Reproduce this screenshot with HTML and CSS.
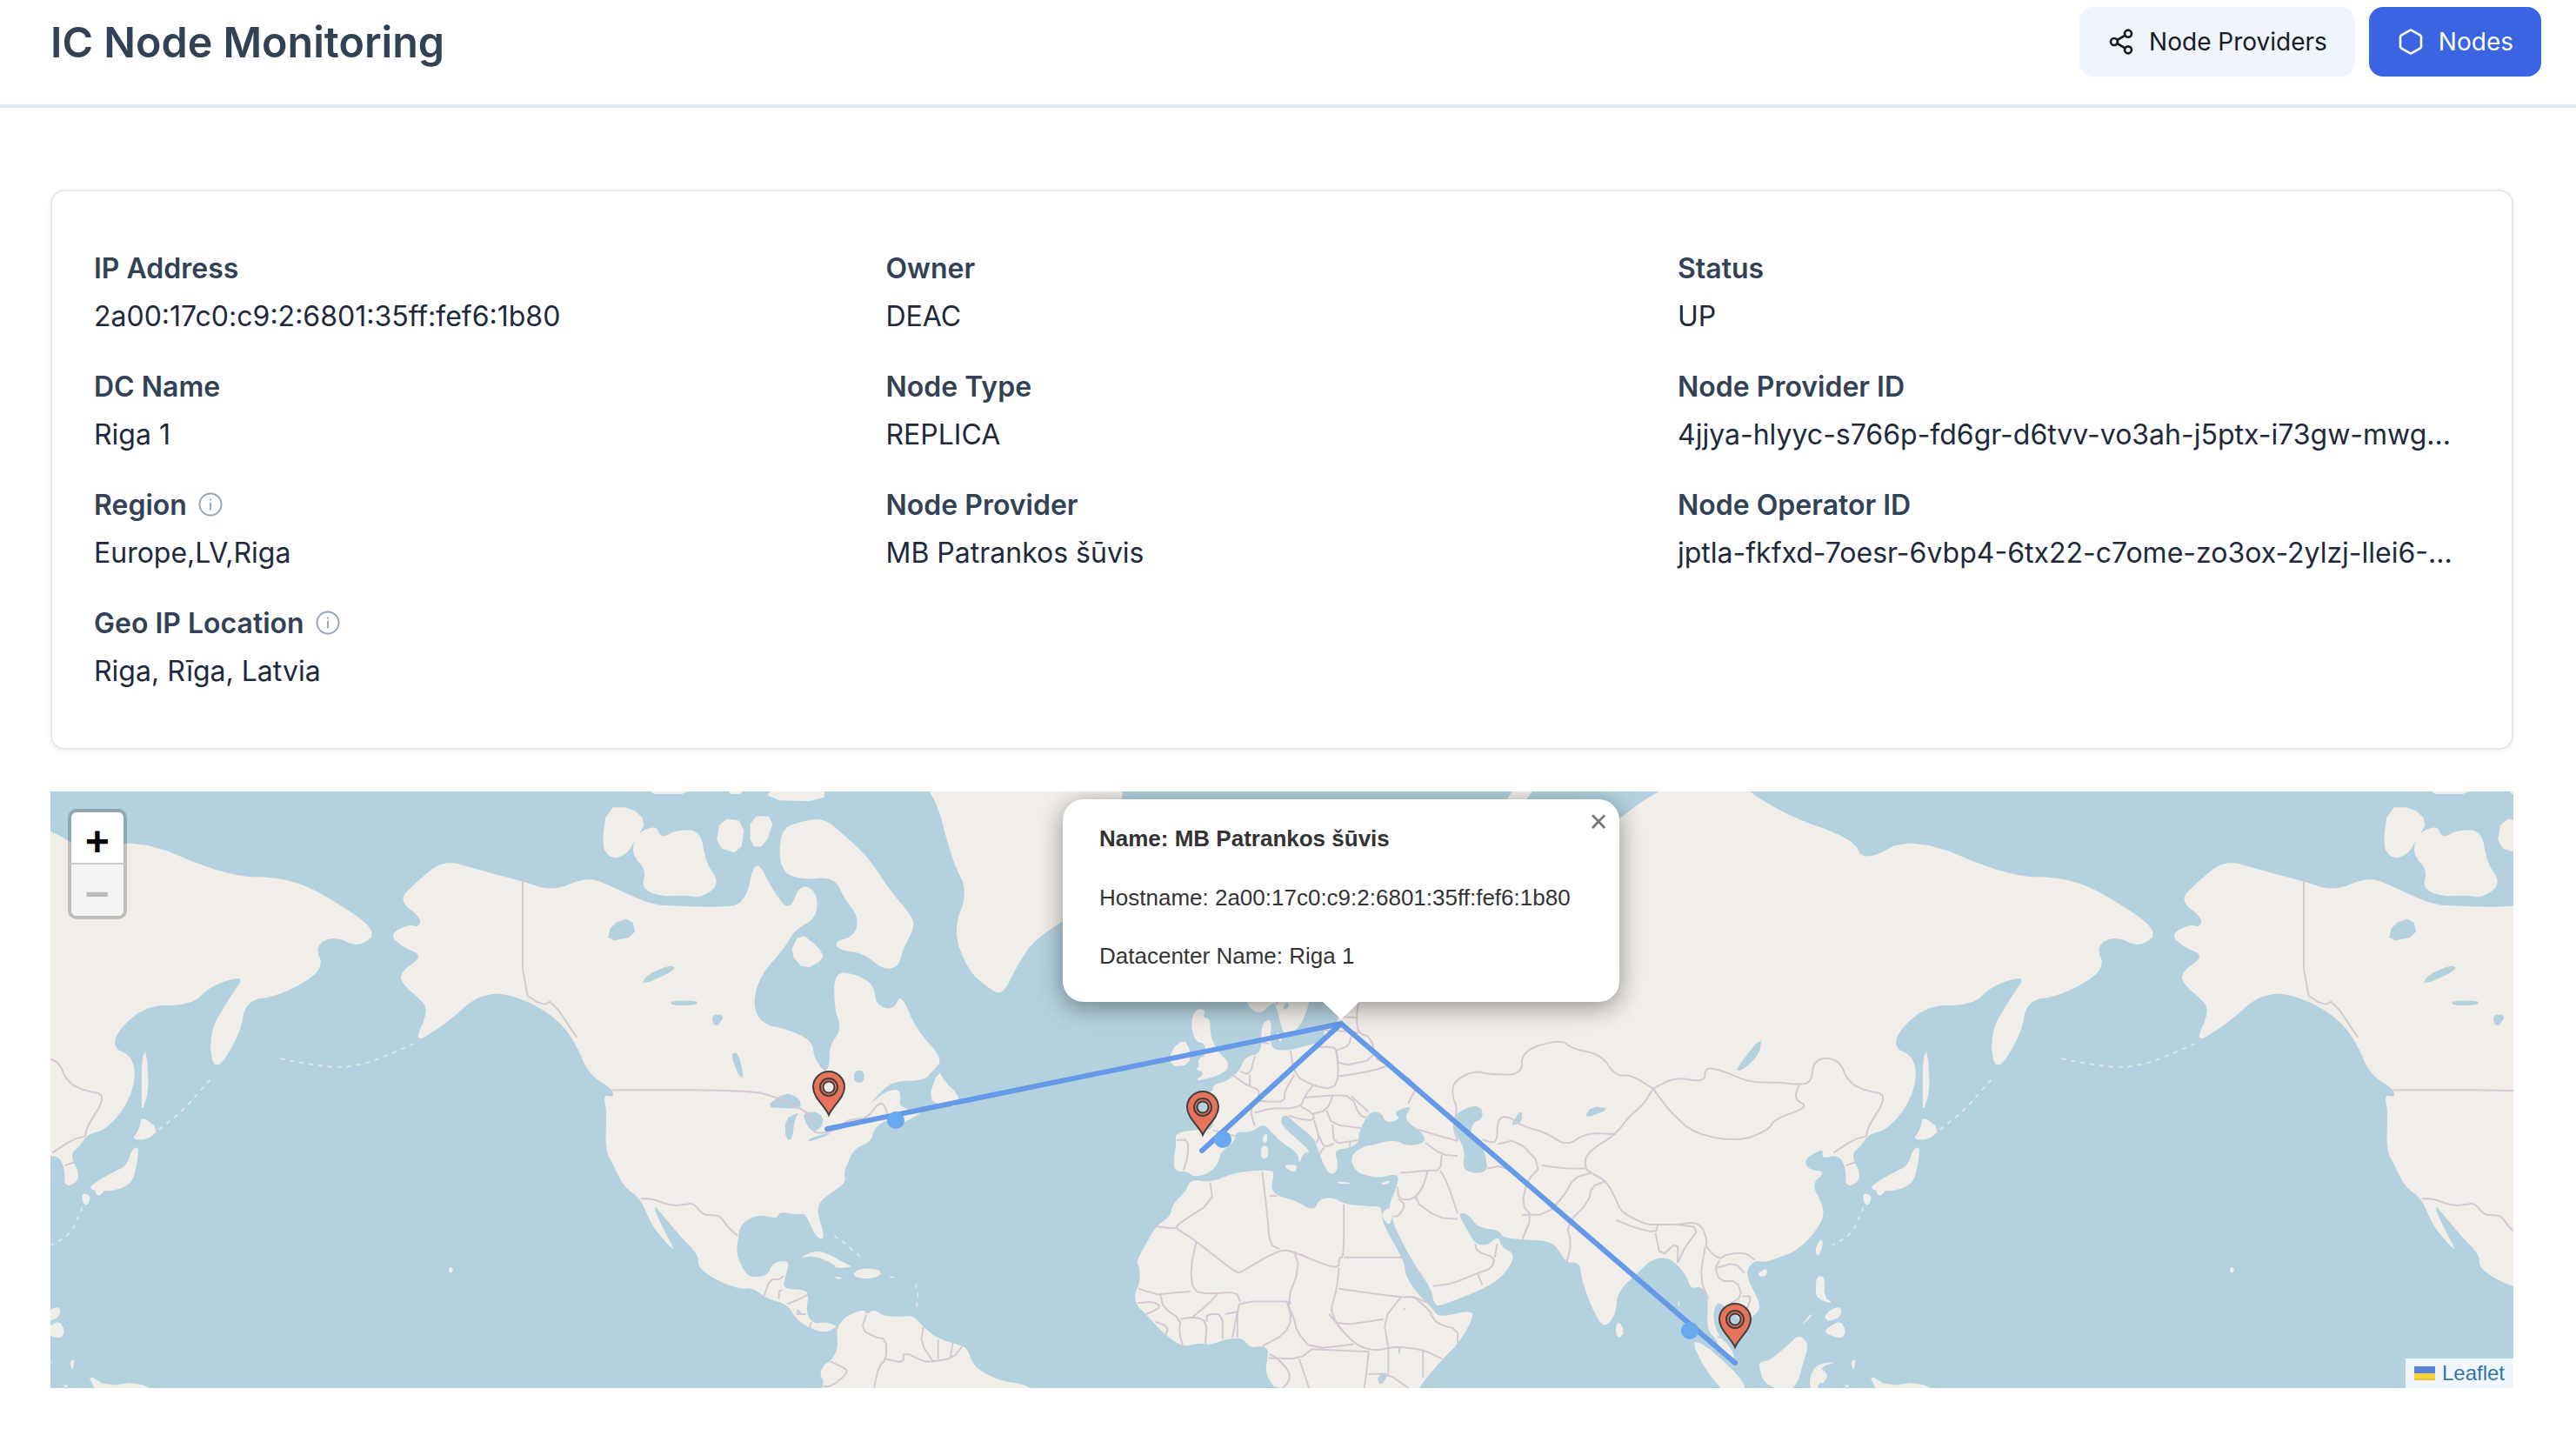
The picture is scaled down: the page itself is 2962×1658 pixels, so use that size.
FILE: index.html
```html
<!DOCTYPE html>
<html lang="en">
<head>
  <meta charset="UTF-8">
  <title>IC Node Monitoring</title>
  <link rel="stylesheet" href="styles.css">
</head>
<body>

  <header class="topbar">
    <h1 class="brand">IC Node Monitoring</h1>
    <nav class="nav">
      <a class="nav-btn" href="#">
        <svg class="nav-icon" viewBox="0 0 24 24" fill="none" stroke="currentColor" stroke-width="2" stroke-linecap="round" stroke-linejoin="round">
          <circle cx="18" cy="5" r="3"></circle>
          <circle cx="6" cy="12" r="3"></circle>
          <circle cx="18" cy="19" r="3"></circle>
          <path d="M8.6 13.5l6.8 4M15.4 6.5l-6.8 4"></path>
        </svg>
        Node Providers
      </a>
      <a class="nav-btn active" href="#">
        <svg class="nav-icon" viewBox="0 0 24 24" fill="none" stroke="currentColor" stroke-width="2" stroke-linecap="round" stroke-linejoin="round">
          <path d="M21 16V8a2 2 0 0 0-1-1.7l-7-4a2 2 0 0 0-2 0l-7 4A2 2 0 0 0 3 8v8a2 2 0 0 0 1 1.7l7 4a2 2 0 0 0 2 0l7-4a2 2 0 0 0 1-1.7z"></path>
        </svg>
        Nodes
      </a>
    </nav>
  </header>

  <main class="content">
    <section class="card">
      <div class="field">
        <div class="label">IP Address</div>
        <div class="value">2a00:17c0:c9:2:6801:35ff:fef6:1b80</div>
      </div>
      <div class="field">
        <div class="label">Owner</div>
        <div class="value">DEAC</div>
      </div>
      <div class="field">
        <div class="label">Status</div>
        <div class="value">UP</div>
      </div>
      <div class="field">
        <div class="label">DC Name</div>
        <div class="value">Riga 1</div>
      </div>
      <div class="field">
        <div class="label">Node Type</div>
        <div class="value">REPLICA</div>
      </div>
      <div class="field">
        <div class="label">Node Provider ID</div>
        <div class="value">4jjya-hlyyc-s766p-fd6gr-d6tvv-vo3ah-j5ptx-i73gw-mwg...</div>
      </div>
      <div class="field">
        <div class="label">Region
          <svg class="info" viewBox="0 0 24 24" fill="none" stroke="currentColor" stroke-width="1.5" stroke-linecap="round">
            <circle cx="12" cy="12" r="10"></circle>
            <path d="M12 11v5.5M12 7.6v.2"></path>
          </svg>
        </div>
        <div class="value">Europe,LV,Riga</div>
      </div>
      <div class="field">
        <div class="label">Node Provider</div>
        <div class="value">MB Patrankos šūvis</div>
      </div>
      <div class="field">
        <div class="label">Node Operator ID</div>
        <div class="value">jptla-fkfxd-7oesr-6vbp4-6tx22-c7ome-zo3ox-2ylzj-llei6-...</div>
      </div>
      <div class="field">
        <div class="label">Geo IP Location
          <svg class="info" viewBox="0 0 24 24" fill="none" stroke="currentColor" stroke-width="1.5" stroke-linecap="round">
            <circle cx="12" cy="12" r="10"></circle>
            <path d="M12 11v5.5M12 7.6v.2"></path>
          </svg>
        </div>
        <div class="value">Riga, Rīga, Latvia</div>
      </div>
    </section>

    <section class="map" id="map">
      <svg class="tiles" id="tiles" width="2832" height="686" viewBox="58 910 2832 686"></svg>

      <svg class="overlay" width="2832" height="686" viewBox="58 910 2832 686">
        <g class="routes">
          <path d="M1542 1177L951 1298"></path>
          <path d="M1542 1177L1382 1323"></path>
          <path d="M1542 1177L1995 1567"></path>
        </g>
        <g class="dots">
          <circle cx="1030" cy="1288" r="10"></circle>
          <circle cx="1406" cy="1310" r="10"></circle>
          <circle cx="1943" cy="1530" r="10"></circle>
        </g>
        <g class="pins">
          <g transform="translate(953 1282)">
            <path fill-rule="evenodd" d="M0 0C-4-10-18-20-18-32A18 18 0 0 1 18-32C18-20 4-10 0 0ZM0-38.5A6.5 6.5 0 1 0 0-25.5A6.5 6.5 0 1 0 0-38.5Z"></path>
            <circle class="pin-ring" cx="0" cy="-32" r="10"></circle>
          </g>
          <g transform="translate(1383 1305)">
            <path fill-rule="evenodd" d="M0 0C-4-10-18-20-18-32A18 18 0 0 1 18-32C18-20 4-10 0 0ZM0-38.5A6.5 6.5 0 1 0 0-25.5A6.5 6.5 0 1 0 0-38.5Z"></path>
            <circle class="pin-ring" cx="0" cy="-32" r="10"></circle>
          </g>
          <g transform="translate(1995 1549)">
            <path fill-rule="evenodd" d="M0 0C-4-10-18-20-18-32A18 18 0 0 1 18-32C18-20 4-10 0 0ZM0-38.5A6.5 6.5 0 1 0 0-25.5A6.5 6.5 0 1 0 0-38.5Z"></path>
            <circle class="pin-ring" cx="0" cy="-32" r="10"></circle>
          </g>
        </g>
      </svg>

      <div class="zoom">
        <a class="zoom-btn" href="#">+</a>
        <a class="zoom-btn disabled" href="#">−</a>
      </div>

      <div class="popup">
        <a class="popup-close" href="#">×</a>
        <p class="popup-title">Name: MB Patrankos šūvis</p>
        <p>Hostname: 2a00:17c0:c9:2:6801:35ff:fef6:1b80</p>
        <p>Datacenter Name: Riga 1</p>
        <span class="popup-tip"></span>
      </div>

      <div class="attribution">
        <svg class="flag" viewBox="0 0 24 16"><rect width="24" height="8" fill="#5b7fdc"></rect><rect y="8" width="24" height="8" fill="#ffd53b"></rect><rect y="14" width="24" height="2" fill="#e6b93a"></rect></svg>
        <a href="#">Leaflet</a>
      </div>
    </section>
  </main>

  <script src="map.js"></script>
</body>
</html>
```

FILE: styles.css
```css
* {
  box-sizing: border-box;
}

body {
  margin: 0;
  background-color: #ffffff;
  font-family: Inter, "Noto Sans", sans-serif;
  color: #1e293b;
}

.topbar {
  display: flex;
  justify-content: space-between;
  align-items: center;
  height: 124px;
  padding: 8px 40px 32px 58px;
  border-bottom: 4px solid #e4e8f0;
  box-shadow: 0 2px 4px rgba(0, 0, 0, 0.02);
}

.brand {
  margin: 0;
  font-size: 48.4px;
  font-weight: 600;
  color: #334155;
}

.nav {
  display: flex;
  gap: 16px;
}

.nav-btn {
  display: flex;
  align-items: center;
  gap: 16px;
  height: 80px;
  padding: 0 32px;
  border-radius: 16px;
  background-color: #f0f4fd;
  color: #161b26;
  font-size: 28px;
  font-weight: 400;
  text-decoration: none;
}

.nav-btn.active {
  background-color: #3b64e3;
  color: #ffffff;
}

.nav-icon {
  width: 32px;
  height: 32px;
}

.content {
  padding: 94px 72px 62px 58px;
}

.card {
  display: grid;
  grid-template-columns: repeat(3, 910.5px);
  row-gap: 32px;
  height: 644px;
  padding: 64px 48px;
  border: 2px solid #e5e7eb;
  border-radius: 16px;
  box-shadow: 0 2px 6px rgba(0, 0, 0, 0.06);
  align-content: start;
}

.field {
  min-width: 0;
}

.label {
  display: flex;
  align-items: center;
  gap: 12px;
  height: 48px;
  font-size: 32px;
  font-weight: 600;
  color: #334155;
}

.value {
  height: 48px;
  margin-top: 8px;
  font-size: 32px;
  line-height: 48px;
  white-space: nowrap;
}

.info {
  width: 30px;
  height: 30px;
  color: #94a3b8;
}

.map {
  position: relative;
  height: 686px;
  margin-top: 48px;
  overflow: hidden;
  background-color: #b3d1de;
}

.tiles,
.overlay {
  position: absolute;
  top: 0;
  left: 0;
}

.tiles {
  filter: blur(0.7px);
}

.land {
  fill: #f1eeea;
  stroke: none;
}

.lake {
  fill: #b3d1de;
  stroke: none;
}

.isles {
  fill: none;
  stroke: #f1eeea;
  stroke-width: 2;
  stroke-dasharray: 5 6;
  opacity: 0.7;
}

.border {
  fill: none;
  stroke: #d6c8d3;
  stroke-width: 2;
  stroke-linejoin: round;
}

.routes path {
  fill: none;
  stroke: #6699e8;
  stroke-width: 6;
  stroke-linecap: round;
}

.dots circle {
  fill: #67a8ee;
}

.pins path {
  fill: #e8735a;
  stroke: #3f3f3f;
  stroke-width: 2;
}

.pin-ring {
  fill: none;
  stroke: #3f3f3f;
  stroke-width: 2;
}

.zoom {
  position: absolute;
  top: 20px;
  left: 20px;
  border: 4px solid rgba(0, 0, 0, 0.2);
  border-radius: 10px;
  background-clip: padding-box;
}

.zoom-btn {
  display: block;
  width: 60px;
  height: 60px;
  background-color: #ffffff;
  color: #000000;
  font-family: "Liberation Mono", monospace;
  font-size: 48px;
  font-weight: 700;
  line-height: 74px;
  text-align: center;
  text-decoration: none;
  border-bottom: 2px solid #cccccc;
  border-radius: 6px 6px 0 0;
}

.zoom-btn.disabled {
  height: 59px;
  background-color: #f4f4f4;
  color: #bbbbbb;
  border-bottom: none;
  border-radius: 0 0 6px 6px;
}

.popup {
  position: absolute;
  top: 9px;
  left: 1164px;
  width: 640px;
  height: 233px;
  padding: 2px 42px;
  border-radius: 24px;
  background-color: #ffffff;
  box-shadow: 0 6px 28px rgba(0, 0, 0, 0.4);
  font-family: "Liberation Sans", Arial, sans-serif;
  font-size: 26px;
  color: #333333;
}

.popup p {
  margin: 20px 0 0 0;
  height: 47.5px;
  line-height: 47.5px;
  white-space: nowrap;
}

.popup .popup-title {
  font-weight: 700;
}

.popup-close {
  position: absolute;
  top: 6px;
  right: 4px;
  width: 40px;
  height: 40px;
  color: #757575;
  font-size: 36px;
  line-height: 40px;
  text-align: center;
  text-decoration: none;
}

.popup-tip {
  position: absolute;
  left: 298px;
  bottom: -20px;
  width: 0;
  height: 0;
  border-left: 22px solid transparent;
  border-right: 22px solid transparent;
  border-top: 21px solid #ffffff;
}

.attribution {
  position: absolute;
  right: 0;
  bottom: 0;
  display: flex;
  align-items: center;
  gap: 8px;
  height: 34px;
  padding: 0 10px;
  background-color: rgba(255, 255, 255, 0.8);
  font-family: "Liberation Sans", Arial, sans-serif;
  font-size: 24px;
}

.attribution a {
  color: #2f78a8;
  text-decoration: none;
}

.flag {
  width: 24px;
  height: 16px;
}
```

FILE: map.js
```js
// base map drawn from rough lon/lat outlines, same projection as the tile layer
const WORLD = 2048;
const X0 = 379;
const EQUATOR = 1574;

function project(p) {
  const x = X0 + (p[0] + 180) / 360 * WORLD;
  const lat = p[1] * Math.PI / 180;
  const y = EQUATOR - WORLD / (2 * Math.PI) * Math.log(Math.tan(Math.PI / 4 + lat / 2));
  return x.toFixed(1) + " " + y.toFixed(1);
}

// corner cutting so the outlines don't look like straight segments
function smooth(points, closed) {
  const out = closed ? [] : [points[0]];
  const count = closed ? points.length : points.length - 1;
  for (let i = 0; i < count; i++) {
    const a = points[i];
    const b = points[(i + 1) % points.length];
    out.push([a[0] * 0.75 + b[0] * 0.25, a[1] * 0.75 + b[1] * 0.25]);
    out.push([a[0] * 0.25 + b[0] * 0.75, a[1] * 0.25 + b[1] * 0.75]);
  }
  if (!closed) out.push(points[points.length - 1]);
  return out;
}

function toPath(points, closed) {
  let pts = smooth(points, closed);
  if (points.length > 8) pts = smooth(pts, closed);
  return "M" + pts.map(project).join("L") + (closed ? "Z" : "");
}

const land = [
  // north america
  [[-168,65.6],[-164,66.5],[-162,66.2],[-161.5,67],[-166,68.3],[-163,69.5],[-157,71.2],[-150,70.5],[-141,69.7],[-135,69],[-128,70],[-124,69.5],[-115,68],[-110,67.9],[-102,67.8],[-96,68],[-94,71.5],[-90,68.8],[-87,67.5],[-85,69.5],[-81.5,69],[-81.5,67],[-86,66],[-88,64.5],[-93,62],[-94.5,59],[-92.5,57],[-88,56.5],[-82.5,55.2],[-82,53],[-80,51.3],[-79,52],[-79,54.5],[-76.5,56.5],[-78,58.7],[-78,62.4],[-73,62],[-70,61],[-69.5,59],[-66,58.5],[-64.5,60.3],[-61.5,56.5],[-56,53],[-58,51.5],[-60,50.2],[-66,50.2],[-69,48.5],[-71,46.9],[-68,48.7],[-65,49.2],[-64.5,48],[-65,47],[-62,46],[-60,46],[-63.5,44.7],[-66,43.7],[-65,45.5],[-67,45],[-70,43.7],[-70.5,41.7],[-74,40.6],[-75.5,38],[-76,36.9],[-75.7,35.2],[-78,33.9],[-81,32],[-81.4,30],[-80.1,26.5],[-80.4,25.2],[-81.8,26],[-82.8,28],[-84,30],[-85.5,29.7],[-89,30.3],[-89.5,29.1],[-91.5,29.5],[-94,29.6],[-97,28],[-97.5,25],[-97.8,22.5],[-96,19],[-94.5,18.2],[-91.5,18.5],[-90.5,21],[-87,21.5],[-87.8,18.5],[-88.5,16],[-84,15.8],[-83.2,14.9],[-83.7,11],[-82,9],[-79.8,9.5],[-77.3,8.6],[-78.3,8],[-80,7.3],[-83,8.2],[-85.7,10],[-87.5,13],[-91.5,14],[-94.5,16.2],[-97,15.9],[-101.5,17.5],[-105.5,20],[-105.5,22.5],[-109,25.8],[-112.5,29.5],[-114.7,31.7],[-113,28],[-110,23],[-112,24.7],[-115,28],[-117.1,32.5],[-120.5,34.5],[-122.5,37.8],[-124.3,40.4],[-124,46.2],[-124.7,48.4],[-122.5,48],[-123,49.2],[-127.5,51],[-130,54.5],[-133,57],[-138,59],[-145,60.3],[-149,60],[-152,59.2],[-154,58.2],[-158,56.5],[-163,54.8],[-160,58.5],[-162,59.8],[-165,61],[-166,62.2],[-161,63.8],[-165,64.5]],
  // arctic islands
  [[-62,66],[-64,64.5],[-65,62.8],[-68,62.5],[-72,64],[-77,64.3],[-78,65],[-74,65.5],[-73,67],[-76,68.5],[-78,70],[-85,69.8],[-89,70.5],[-89,73],[-85,73.5],[-80,73.7],[-76,72.7],[-71,71.3],[-67,69.2],[-62,67]],
  [[-117,69.2],[-113,68.6],[-108,68.7],[-105,68.5],[-101,69.5],[-104,71],[-105,73],[-110,73],[-113,72.5],[-114,73.3],[-118,72.8],[-119,71.5],[-116,70.5]],
  [[-125,72],[-123,71.2],[-120,71.5],[-118,72.5],[-116,73.5],[-119,74.3],[-124,74.3]],
  [[-102,72],[-97,71.5],[-96,73.5],[-101,73.7]],
  [[-95,72],[-92,72],[-90,73.8],[-95,73.8]],
  [[-92,74.7],[-80,74.6],[-80,75.6],[-90,75.6]],
  [[-117,75],[-106,75],[-106,76.5],[-117,76.5]],
  [[-100,75],[-96,75],[-96,76.5],[-100,76.5]],
  [[-80,63.5],[-84,62.5],[-87,64],[-85,65.8],[-81,64.5]],
  [[-57,51.6],[-55.5,50],[-53,48.5],[-52.8,46.8],[-56,46.8],[-59,47.8]],
  // greenland
  [[-44,60],[-41,63],[-37,65.5],[-26,68],[-22,70.5],[-20,75],[-18,77],[-70,77],[-66,76],[-58,75.5],[-54,71],[-51,69],[-54,66],[-51,62.5],[-47,60.8]],
  // iceland, british isles
  [[-24,65.5],[-22,64],[-19,63.4],[-14,64.7],[-15,66.2],[-18,66.1],[-22,66.4]],
  [[-5.5,50],[1.3,51.2],[1.7,52.7],[0,53.5],[-1.5,55],[-2,56],[-2,57.6],[-3.5,57.7],[-3,58.6],[-5,58.6],[-6,57],[-5,55],[-3,54.8],[-3,53.3],[-4.5,53],[-4.2,52],[-5,51.7],[-3,51.2]],
  [[-10,52],[-6.3,52.2],[-6,54],[-7.3,55.3],[-10,54]],
  // eurasia
  [[-9,37],[-9.5,38.7],[-8.8,41.5],[-9.2,43],[-4,43.5],[-1.5,43.4],[-1.2,46],[-4.7,48.4],[-1.5,48.7],[-1.5,49.7],[1.5,50.2],[4,51.6],[5,53.2],[8.5,53.7],[8.2,57],[10.5,57.7],[10,55],[11,54],[14,54],[18.5,54.7],[21,55],[21,57],[23.5,57],[24.3,58.3],[23.5,59.2],[28,59.6],[30,60],[25,60.2],[22,60],[21.3,62],[25,65],[22,65.8],[18,63],[17,61],[18.5,60],[16.5,57],[14.5,56],[13,55.4],[11.3,59],[10.6,59.3],[8,58],[5.3,59],[5,62],[10,64],[14,67.5],[19,70],[25,71],[31,70.2],[41,67.5],[40,66],[35,66.5],[33,66.7],[35,64.3],[37,64],[40,64.7],[44,66.3],[44,68.4],[54,68.7],[60,69],[67,69],[67,72],[72,73],[73,68],[74,72.5],[80,73.5],[87,75],[100,76.5],[113,74],[128,72.5],[130,71],[140,72.7],[160,70],[170,70],[178,69],[190,66],[186,64.5],[181,65.5],[177,64.7],[179,62.5],[170,60],[163,59.5],[162,56],[156.7,51],[155.5,56],[160,60],[163,62],[156,61],[152,59],[142,59],[135,54.7],[141,53],[140,48],[135,43.5],[131,42.8],[129.5,41],[127.5,39.7],[129.3,37],[129,35.2],[126.4,34.5],[126.5,37.5],[125,39.7],[121.5,39],[122,40.7],[118,39],[119,37.3],[122.5,37],[119.5,35],[121.8,31.5],[122,29],[119,25.3],[116,23],[113,22],[110,21],[108,21.5],[106,19],[109,13.5],[109,11.5],[105,8.7],[105,10.2],[102,12.5],[100.5,13.5],[99.5,11],[100.5,7],[103.5,4],[104,1.5],[101.5,2.8],[100.3,6],[98.3,8],[98.7,14],[97.5,16.5],[95,16],[94.3,18.5],[92,21],[90,22],[87,21.5],[85,19.5],[80.3,15.5],[80,11],[77.5,8],[75,12.5],[73,18],[72.7,21],[70,21],[69,22.5],[67,25],[61.5,25.2],[57,25.7],[56.4,27],[52,27.5],[50,30],[48,30],[50,27],[51.5,24.5],[54,24.2],[56.3,26],[56.7,24],[59.8,22.5],[57.5,18.8],[55,17],[52,15.5],[45,12.8],[43.3,12.7],[42.7,16],[39,21],[35,28],[34.9,29.5],[34,31.2],[35.9,35],[36,36.7],[32,36],[30,36.3],[27.3,37],[26.2,39.5],[29,41],[31,41.2],[35,42],[38,41],[41.5,41.5],[41,43],[37,45],[39,47],[35,46],[36.5,45],[33.5,44.4],[32.5,46],[30,46],[28,43],[28,41.5],[26,40.7],[23,40.4],[24,38],[23,36.5],[21.5,37],[19.5,41],[19,42.2],[15,44.5],[13.7,45.6],[12.3,45.3],[12.5,44],[16,41.8],[18.4,40],[16.7,40],[16,38],[15.7,40],[12.5,41.5],[10.5,43],[8.8,44.4],[6,43],[3.2,43.2],[3,41.8],[0,40],[-0.3,38.5],[-2,36.8],[-5.4,36.1],[-6.5,37]],
  // mediterranean islands
  [[8.3,39],[9.7,39.2],[9.7,41],[8.3,41]],
  [[8.6,41.6],[9.5,41.5],[9.5,43],[8.7,42.6]],
  [[12.5,38],[15.6,38.2],[15.2,36.7]],
  [[23.6,35.4],[26.3,35.2],[26,35],[24,35]],
  [[32.4,34.8],[34,35],[34.5,35.6],[33,35.3]],
  [[11,56],[12.6,56],[12.3,54.8]],
  // east asia islands
  [[52,71],[57,70.7],[57,73],[68,76.8],[60,76]],
  [[142,46],[143.5,49],[143,54],[142,53],[142,48]],
  [[131,34],[136,33.7],[140,35],[141,38],[141.5,41],[140,40.5],[139,38],[136.5,37],[133,35.5]],
  [[140,42],[143.2,42],[145.5,43.5],[142,45.5],[141.5,43.5]],
  [[130,33.5],[131.8,33],[131,31.2],[130,32]],
  [[132.5,34],[134.5,34],[134,33.3],[133,33]],
  [[120.2,23],[121,22],[122,25],[121,25.2]],
  [[108.7,19],[110.5,20],[110.5,18.5],[109,18.3]],
  [[120.3,16],[120.7,14],[124,13],[122,14.5],[122.3,18.3],[120.6,18.5]],
  [[122,7.3],[125.5,6],[126.5,7.5],[125.5,9.7],[123,8.5]],
  [[122,10.5],[123,9.5],[125.5,10.5],[125.5,12.5],[123.5,12]],
  [[117.3,8.5],[119.5,10.5],[119.5,11.3]],
  [[109,1.5],[111,1.6],[115,5],[117,7],[119,5],[117.8,1],[116.5,-3.5],[114,-4.5],[110,-3],[109,0]],
  [[95.3,5.5],[97.5,5.2],[103,0.5],[106,-3],[106,-5],[102,-5],[98,0]],
  [[119.5,-5],[119,-2],[120.5,1],[125,1.5],[121,0.3],[123,-1],[122,-3],[121,-2.7],[120.5,-5]],
  [[127.5,1.5],[128,-0.5],[128.5,2]],
  [[126,-3.2],[127.2,-3.3],[126.8,-3.8]],
  [[131,-1],[135,-3.5],[141,-2.6],[146,-5],[133,-5]],
  [[79.8,8],[80.5,9.7],[81.8,7.5],[80.5,6]],
  // africa
  [[-5.9,35.8],[-2,35.2],[3,36.9],[10,37.3],[11,36.8],[10.2,34.3],[11.5,33],[15,32.3],[19,30.3],[20,32.5],[23,32.7],[25,31.6],[30,31.2],[32.5,31.2],[32.6,30],[33,28],[35.5,24],[37.2,21],[37.5,18.5],[39.5,15.5],[43,12],[43.3,11.5],[44.5,10.4],[51.2,11.9],[50.8,9.5],[48,5],[45,2],[41.5,-2],[39.5,-5],[12,-5],[9,-1],[9.7,3],[9.5,4.2],[8.5,4.6],[6,4.3],[4.5,6.3],[1,6],[-2,4.8],[-4.5,5.2],[-7.5,4.4],[-11,6.8],[-13.2,9],[-15,11],[-16.7,12.5],[-17.4,14.7],[-16.3,17],[-16.2,20],[-17,21.2],[-15,24.5],[-13,27.7],[-10,29.5],[-9.7,31.5],[-7,33.7]],
  [[32.6,30],[34.3,31.2],[34.9,29.5],[34.2,27.8],[33,29]],
  // south america
  [[-81,-5],[-80,-2.5],[-81,-1],[-80,1],[-78.8,1.5],[-77.3,3.9],[-77.5,7],[-77.3,8.6],[-75.5,10.7],[-72,12],[-71.5,10.9],[-70,12],[-68,10.6],[-64,10.5],[-62,10.7],[-60,8.5],[-57,6],[-52,4.7],[-51,3.8],[-50,1],[-48,-0.7],[-44,-2.5],[-40,-3],[-36,-5]],
  // caribbean
  [[-85,21.8],[-82.5,23.1],[-80,23],[-75,20.5],[-74.2,20.2],[-77.7,19.9],[-78,20.7],[-82,22.3]],
  [[-74.4,18.5],[-73,19.9],[-69,19.8],[-68.4,18.6],[-71.5,17.8]],
  [[-78.3,18.3],[-76.3,18.2],[-77,17.8]],
  [[-67.2,18.4],[-65.7,18.3],[-66,18]],
  // hawaii
  [[-156,19.8],[-155.6,18.9],[-154.9,19.6],[-155.5,20.2]],
  [[-158.2,21.6],[-157.7,21.3],[-156.2,20.8],[-156.7,20.9]]
];

// island chains, too thin for polygons
const chains = [
  [[-163,54.8],[-168,53.5],[-172,52.5],[-178,51.8],[-186,52.5],[-190,53]],
  [[145.5,43.5],[150,46],[154,49],[156.5,50.8]],
  [[130,31],[127.7,26.3],[123.8,24.3]],
  [[-61.5,17],[-61,14],[-61.5,12]],
  [[-78,26],[-75,24],[-72,21.5]],
  [[92.7,13.5],[92.7,10]]
];

const lakes = [
  [[-92,46.7],[-88,48.7],[-85,47.9],[-84.7,46.5],[-87.5,46.5]],
  [[-87.8,42],[-86.5,42],[-86,45],[-85,46],[-88,45]],
  [[-84.5,46],[-81,46],[-80,44.5],[-82,43],[-83.5,44]],
  [[-83.4,41.6],[-79,42.7],[-79,43],[-83,42.2]],
  [[-79.7,43.3],[-76.3,43.4],[-76.3,44.2],[-79.2,43.9]],
  [[-99,53.5],[-97,50.5],[-96.3,51],[-97.5,53.8]],
  [[-117,61],[-110,62.5],[-111,63],[-116,62]],
  [[-124,65],[-118,65.5],[-119,67],[-123,66.5]],
  [[-111,59],[-106,59],[-105.5,59.5],[-111,59.5]],
  [[-74,50],[-72,50],[-72,51.5],[-74,51.5]],
  [[-102,56.5],[-100,58],[-103,58]],
  [[-85.5,11],[-84.5,11],[-85.5,12.2]],
  [[47,45.5],[51,47],[53,46.5],[53,45],[51,44.5],[50.5,42.5],[52.8,41.5],[53.8,39],[54,37],[51,36.7],[49,37.5],[49.5,40.5],[47.5,43]],
  [[58.5,44],[61,46.5],[61,44.5]],
  [[73.5,45],[79,46.5],[75,46.8]],
  [[104,51.6],[109.5,55.7],[109,53.5],[105.5,51.5]],
  [[30.5,60],[33,60.5],[32,61.5],[30,61]],
  [[34.8,61],[36,61.5],[35,62.7]],
  [[12.5,58.5],[14,58.8],[13.5,59.5]],
  [[31.8,-1.5],[34,-0.5],[33,-3],[32,-3]],
  [[36,2.5],[36.6,4.5],[36,4]],
  [[37,11.6],[37.5,12.2],[37,12.2]],
  [[13.2,13],[14.5,13],[14,13.8]]
];

const borders = [
  // north america
  [[-141,69.7],[-141,60.3],[-137,59],[-135,59.5],[-130,55.5]],
  [[-123,49],[-95,49],[-89.5,48],[-84.7,46.5],[-82.5,45.3],[-82.5,43],[-79,43],[-76.5,44],[-75,45],[-71.5,45],[-69,47.3],[-67.8,47],[-67,45]],
  [[-117,32.5],[-114.8,32.5],[-111,31.3],[-108,31.5],[-106.5,31.8],[-104.5,29.7],[-102.7,29.7],[-101,29.5],[-99.5,27.5],[-97.5,26]],
  [[-92.2,14.6],[-91,17.8],[-89,17.8],[-88.3,18.5]],
  [[-89.2,14],[-89.2,15.5],[-88.5,15.8]],
  [[-87.5,13],[-85,14],[-83.2,14.9]],
  [[-85.7,11],[-83.7,11]],
  [[-83,8.2],[-82.6,9.5]],
  [[-77.3,8.6],[-77.8,7.3]],
  // south america
  [[-71.5,10.9],[-72.5,8],[-70,6.5],[-67.5,6],[-67.5,2],[-69,0.5],[-70,-4]],
  [[-60,8.5],[-60.5,5.2],[-58,1.5]],
  [[-57,6],[-57,2]],
  [[-54,5.5],[-54.5,2.5]],
  [[-52,4.7],[-54,2.2],[-58,1.5],[-60,1.5],[-64,3.5],[-64,1.2],[-67.5,2]],
  [[-78.8,1.5],[-75.5,0],[-75.5,-1],[-78.5,-3.5],[-80.3,-3.5]],
  // europe
  [[-8.8,41.9],[-6.5,42],[-6.5,39.5],[-7.4,37.2]],
  [[-1.5,43.4],[3.2,42.5]],
  [[2.5,51],[4.5,50],[6,49.5],[8,49],[7.5,47.6],[6,46.3],[7,44]],
  [[4,51.4],[6,51],[7,53.3]],
  [[6,49.5],[6,51]],
  [[8.5,54.9],[10,54.8]],
  [[14.2,54],[15,51],[18.7,49.6],[22.8,49.1],[24,50.8],[23.5,54],[22.8,54.4],[19.5,54.4]],
  [[7.5,47.6],[10,47.4],[13,47.5],[13,48.8],[15,51]],
  [[7,45.9],[10,46.5],[13.7,46.5]],
  [[13.7,46.5],[16.3,46.8],[17,48],[18.7,49.6]],
  [[17,48],[22.8,48.3]],
  [[16.3,46.8],[18.8,45.8],[19,44.8],[16,45],[14,45.5]],
  [[18.8,45.8],[21.5,46.2],[22.8,48.3]],
  [[22.8,48.3],[26.5,48.2],[28.2,45.5],[29.7,45.2]],
  [[26.5,48.2],[30,46]],
  [[21.5,46.2],[22.7,44.2],[28.5,43.7]],
  [[22.7,44.2],[23,41.4],[26.3,41.7],[28,42]],
  [[19,44.8],[20,42.5],[19.5,41.5]],
  [[20,42.5],[21,40.8],[23,41.4]],
  [[21,40.8],[20,39.7]],
  [[26.2,41],[26.3,41.7]],
  // nordics, baltics
  [[11.3,59],[12.5,61],[12,64],[16,68],[20.5,69],[25,69],[29,69.5]],
  [[24,65.8],[24,68],[20.5,69]],
  [[28,59.6],[27.5,57.5],[28,56],[30.5,55.5],[31.5,53],[24,52],[23.5,54]],
  [[24,57.8],[27.5,57.7]],
  [[21,56.3],[26,56.2],[28,56]],
  [[23.5,54],[26,54.5],[26.5,55.7]],
  [[28,59.6],[30,61],[31,62.5],[29.5,65],[29,69.5]],
  [[31.5,53],[34,52.2],[40,49.7],[38,47.2]],
  [[24,50.8],[31,51.5],[34,52.2]],
  // caucasus, middle east
  [[40,43.5],[44,42.6],[48,41.8]],
  [[41.5,41.5],[44.8,39.7],[48,39.5]],
  [[44.8,39.7],[44.5,37.2],[42,37.2],[36.5,36.8]],
  [[44.5,37.2],[46,35],[48,30]],
  [[42,37.2],[41,34.5],[39,32.3],[36,32.5],[35.9,34.5]],
  [[41,34.5],[39,32.3],[44,29.2],[48,29]],
  [[36,32.5],[37.5,31.5],[36,29.4],[35,29.5]],
  [[43,16.5],[47,17],[52,19],[55,20],[55.5,22],[52,23],[51.5,24.5]],
  [[52,19],[53,16.7]],
  [[55.5,22],[56,24.5]],
  // russia south, central asia
  [[48,41.8],[47,44],[48,46.5],[47,48],[47,50],[51,51.5],[55,51],[61,51],[61,54],[69,55.3],[71,54.2],[77,53.5],[80,50.8],[83,51],[87.5,49.2]],
  [[87.5,49.2],[92,50.7],[98,50],[98,52],[102,51.4],[107,50],[113,50],[117,49.7],[119.5,50],[120,53],[125,53],[127,50],[130.5,48.9],[135,48.4],[131,44],[130.6,42.5]],
  [[87.5,49.2],[91,46],[96,42.8],[105,41.7],[111,43.5],[112,45],[119,46.7],[116,47.8],[117,49.7]],
  [[87.5,49.2],[85.5,47],[82.5,45.3],[80,42.8],[74,40],[73.7,37.5],[75,36.8],[78,35.5],[80,32.5],[81,30.2],[86,28],[88.5,28],[92,28],[97,28.5],[98.5,25],[98,24],[101,21.5],[102,22.5],[106,23],[108,21.5]],
  [[80,42.8],[74,43],[70,41],[66,43],[61,44],[58,45.5],[56,45],[56,41.3],[53,42]],
  [[56,41.3],[60,42],[65,38],[62,35.5],[61,31.5],[63,29.5],[61,25.2]],
  [[65,38],[70,37.5],[73.7,37.5]],
  [[54,37.5],[57,38],[62,35.5]],
  [[61,29.7],[66,29.8],[69.5,33],[71.5,36],[75,36.8]],
  [[70,21],[71,24.5],[70,28],[74.5,32],[75,34.5],[78,35.5]],
  [[80,28.8],[84,27.4],[88,26.5],[88.5,28]],
  [[88,26.5],[89,22],[92.5,25],[92.5,21]],
  [[92,28],[97,27.5],[94,24],[92.5,21]],
  [[98,24],[97,18],[98.7,14]],
  [[101,21.5],[100,20],[101,17.5],[104.5,17.5],[105.5,14.5],[103,13]],
  [[100.5,20],[104,21],[106,19]],
  [[105.5,14.5],[107.5,14.5],[106,11],[105,10.5]],
  [[100.5,6.5],[102,6.2]],
  [[124,40],[128,42],[130.6,42.5]],
  [[126.5,38],[128.4,38.5]],
  // africa
  [[-2,35.2],[-1.5,32],[-8.7,28],[-8.7,27.2],[-13,27.7]],
  [[-8.7,27.2],[-4.8,25],[3.3,19],[4.2,19.2],[12,23.5],[15,23],[24,19.5],[24,22],[25,22],[25,31.6]],
  [[8.5,37],[9.5,30],[10,24.5],[12,23.5]],
  [[10,33],[11.5,33]],
  [[25,22],[37,22]],
  [[24,20],[23.5,15.5],[22,11],[27,5],[31,3.7],[34,4.2],[36,4.5],[41,3.9],[45,2]],
  [[24,16],[36.5,14.3],[39,14.5],[42.5,13]],
  [[36.5,14.3],[33,10],[34,4.2]],
  [[33,10],[24,8.7],[22,11]],
  [[15,23],[16,20],[13.5,13.5],[15,10],[15.5,7.5],[18.5,4],[27,5]],
  [[13.5,13.5],[4,13.5],[3.5,11.5],[2.5,6.3]],
  [[4,13.5],[3.3,15.4],[-2,15],[-5.5,15.5],[-6,20],[-4.8,25]],
  [[-6,15.5],[-12,15],[-12,14.7],[-16.5,16]],
  [[-12,14.7],[-11.5,12.3],[-8,10],[-8.3,7.5],[-7.5,4.4]],
  [[-8,10],[-5,10.5],[-2.7,9.5],[-3,5]],
  [[-2.7,9.5],[-2.7,11],[0.5,11],[0.5,6]],
  [[-5.5,10.5],[-3,12.5],[-0.5,15]],
  [[3.5,11.5],[1,11]],
  [[3.5,6.4],[3.5,9],[3.5,11.5]],
  [[8.5,4.6],[13,7],[14.5,10],[13.5,13.5]],
  [[9.7,2.2],[16,2],[18.5,4]],
  [[16,2],[18,-4]],
  [[18.5,4],[30,3.5]],
  [[30,3.5],[29.5,-1.5],[29,-4.5]],
  [[30,-1],[34,-1],[37.5,-3.5],[39.5,-4.7]],
  [[34,4.2],[34,-1]],
  [[41,3.9],[41,-1.7]],
  [[42.5,11],[44,9],[48,8],[48,5]],
  [[42.8,11],[41.5,12.5],[39,14.5]],
  [[-16.7,13.2],[-13.5,13.5],[-12,12.5],[-13.7,11.5],[-15,11]],
  [[-11,6.8],[-10.5,8.5],[-13,9.5]],
  [[10,3],[11.5,2.2],[14,-0.5],[14,-2.5],[12,-4.5]]
];

const tiles = document.getElementById("tiles");
const NS = "http://www.w3.org/2000/svg";
let markup = "";

land.forEach(function (poly) {
  markup += '<path class="land" d="' + toPath(poly, true) + '"></path>';
});
chains.forEach(function (line) {
  markup += '<path class="isles" d="' + toPath(line, false) + '"></path>';
});
lakes.forEach(function (poly) {
  markup += '<path class="lake" d="' + toPath(poly, true) + '"></path>';
});
borders.forEach(function (line) {
  markup += '<path class="border" d="' + toPath(line, false) + '"></path>';
});

// the world repeats left and right of the main copy
[-WORLD, 0, WORLD].forEach(function (shift) {
  const group = document.createElementNS(NS, "g");
  group.setAttribute("transform", "translate(" + shift + " 0)");
  group.innerHTML = markup;
  tiles.appendChild(group);
});
```
